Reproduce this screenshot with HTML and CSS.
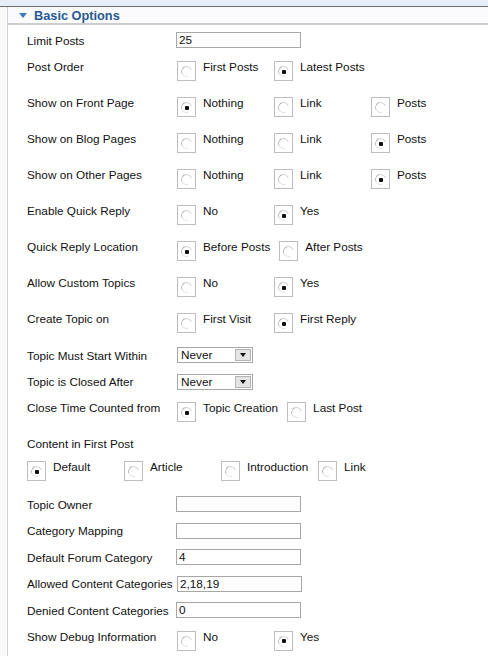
FILE: index.html
```html
<!DOCTYPE html>
<html>
<head>
<meta charset="utf-8">
<link rel="stylesheet" href="styles.css">
</head>
<body>
<div class="topbar"></div>
<div class="page">
  <div class="side"></div>
  <div class="panel">
    <div class="panel-head"><span class="tri"></span><span class="title">Basic Options</span></div>
    <div class="rows">
      <div class="row tr first"><div class="lbl">Limit Posts</div><div class="txt">25</div></div>

      <div class="row rr"><div class="lbl">Post Order</div><div class="opts">
        <div class="opt"><span class="rb"></span><span>First Posts</span></div>
        <div class="opt"><span class="rb on"></span><span>Latest Posts</span></div>
      </div></div>

      <div class="row rr"><div class="lbl">Show on Front Page</div><div class="opts">
        <div class="opt"><span class="rb on"></span><span>Nothing</span></div>
        <div class="opt"><span class="rb"></span><span>Link</span></div>
        <div class="opt"><span class="rb"></span><span>Posts</span></div>
      </div></div>

      <div class="row rr"><div class="lbl">Show on Blog Pages</div><div class="opts">
        <div class="opt"><span class="rb"></span><span>Nothing</span></div>
        <div class="opt"><span class="rb"></span><span>Link</span></div>
        <div class="opt"><span class="rb on"></span><span>Posts</span></div>
      </div></div>

      <div class="row rr"><div class="lbl">Show on Other Pages</div><div class="opts">
        <div class="opt"><span class="rb"></span><span>Nothing</span></div>
        <div class="opt"><span class="rb"></span><span>Link</span></div>
        <div class="opt"><span class="rb on"></span><span>Posts</span></div>
      </div></div>

      <div class="row rr"><div class="lbl">Enable Quick Reply</div><div class="opts">
        <div class="opt"><span class="rb"></span><span>No</span></div>
        <div class="opt"><span class="rb on"></span><span>Yes</span></div>
      </div></div>

      <div class="row rr"><div class="lbl">Quick Reply Location</div><div class="opts">
        <div class="opt"><span class="rb on"></span><span>Before Posts</span></div>
        <div class="opt"><span class="rb"></span><span>After Posts</span></div>
      </div></div>

      <div class="row rr"><div class="lbl">Allow Custom Topics</div><div class="opts">
        <div class="opt"><span class="rb"></span><span>No</span></div>
        <div class="opt"><span class="rb on"></span><span>Yes</span></div>
      </div></div>

      <div class="row rr"><div class="lbl">Create Topic on</div><div class="opts">
        <div class="opt"><span class="rb"></span><span>First Visit</span></div>
        <div class="opt"><span class="rb on"></span><span>First Reply</span></div>
      </div></div>

      <div class="row sr1"><div class="lbl">Topic Must Start Within</div><div class="sel"><span>Never</span><span class="sel-btn"><span class="arrow"></span></span></div></div>
      <div class="row sr2"><div class="lbl">Topic is Closed After</div><div class="sel"><span>Never</span><span class="sel-btn"><span class="arrow"></span></span></div></div>

      <div class="row rr"><div class="lbl">Close Time Counted from</div><div class="opts">
        <div class="opt"><span class="rb on"></span><span>Topic Creation</span></div>
        <div class="opt"><span class="rb"></span><span>Last Post</span></div>
      </div></div>

      <div class="row cl"><div class="lbl wide">Content in First Post</div></div>
      <div class="row rr tall"><div class="opts flush">
        <div class="opt"><span class="rb on"></span><span>Default</span></div>
        <div class="opt"><span class="rb"></span><span>Article</span></div>
        <div class="opt"><span class="rb"></span><span>Introduction</span></div>
        <div class="opt"><span class="rb"></span><span>Link</span></div>
      </div></div>

      <div class="row tr"><div class="lbl">Topic Owner</div><div class="txt"></div></div>
      <div class="row tr"><div class="lbl">Category Mapping</div><div class="txt"></div></div>
      <div class="row tr"><div class="lbl">Default Forum Category</div><div class="txt">4</div></div>
      <div class="row tr"><div class="lbl">Allowed Content Categories</div><div class="txt shift">2,18,19</div></div>
      <div class="row tr"><div class="lbl">Denied Content Categories</div><div class="txt">0</div></div>

      <div class="row rr"><div class="lbl">Show Debug Information</div><div class="opts">
        <div class="opt"><span class="rb"></span><span>No</span></div>
        <div class="opt"><span class="rb on"></span><span>Yes</span></div>
      </div></div>
    </div>
  </div>
</div>
</body>
</html>
```
FILE: styles.css
```css
html, body {
  margin: 0;
  padding: 0;
  background: #ffffff;
}
body {
  font-family: "Liberation Sans", Arial, sans-serif;
  font-size: 11.75px;
  color: #111111;
  width: 488px;
  height: 656px;
  overflow: hidden;
}
.topbar {
  height: 6px;
  background: #e6eef9;
  border-bottom: 1px solid #6e6e6e;
}
.page {
  display: flex;
  height: 649px;
}
.side {
  width: 7px;
  flex: none;
  background: #f8f8f8;
  border-right: 1px solid #d4d4d4;
}
.panel {
  flex: 1;
  min-width: 0;
}
.panel-head {
  height: 16px;
  background: #fbfafd;
  border-bottom: 2px solid #cdcdcd;
  display: flex;
  align-items: center;
  padding-left: 11px;
}
.tri {
  width: 0;
  height: 0;
  border-left: 4px solid transparent;
  border-right: 4px solid transparent;
  border-top: 5px solid #3a7cc0;
  margin-right: 7px;
  margin-top: 1px;
}
.title {
  font-weight: bold;
  font-size: 12.75px;
  color: #285a92;
}
.rows {
  padding-top: 1px;
}
.row {
  display: flex;
  padding-left: 19px;
  box-sizing: border-box;
}
.row.tr {
  height: 26.5px;
  align-items: center;
}
.row.tr.first {
  height: 28px;
}
.row.sr1 {
  height: 26px;
  align-items: center;
}
.row.sr2 {
  height: 27px;
  align-items: center;
}
.row.rr {
  height: 36px;
  align-items: flex-start;
  padding-top: 5px;
  line-height: 15px;
}
.row.rr.tall {
  height: 37px;
}
.row.cl {
  height: 23px;
  align-items: flex-start;
  padding-top: 5px;
  line-height: 15px;
}
.lbl {
  width: 149px;
  flex: none;
  white-space: nowrap;
}
.lbl.wide {
  width: auto;
}
.txt {
  width: 125px;
  height: 16px;
  box-sizing: border-box;
  border: 1px solid #a7a7a7;
  padding-left: 2px;
  line-height: 14px;
  background: #fff;
}
.txt.shift {
  margin-left: 1px;
}
.sel {
  width: 76px;
  height: 16px;
  box-sizing: border-box;
  margin-left: 1px;
  border: 1px solid #a7a7a7;
  display: flex;
  align-items: center;
  justify-content: space-between;
  padding-left: 3px;
  line-height: 14px;
  background: #fff;
}
.sel-btn {
  width: 16px;
  height: 12px;
  box-sizing: border-box;
  margin-right: 1px;
  background: #e4e4e4;
  border: 1px solid #b4b4b4;
  display: flex;
  align-items: center;
  justify-content: center;
}
.arrow {
  width: 0;
  height: 0;
  border-left: 3.5px solid transparent;
  border-right: 3.5px solid transparent;
  border-top: 4px solid #111;
}
.opts {
  display: flex;
  margin-left: 1px;
}
.opts.flush {
  margin-left: 0;
}
.opt {
  display: flex;
  align-items: flex-start;
  min-width: 88px;
  margin-right: 9px;
  white-space: nowrap;
}
.rb {
  position: relative;
  flex: none;
  width: 19px;
  height: 20px;
  box-sizing: border-box;
  border: 1px solid #bdbdbd;
  background: #fff;
  margin-top: 2px;
  margin-right: 7px;
}
.rb::before {
  content: "";
  position: absolute;
  left: 3px;
  top: 4px;
  width: 11px;
  height: 11px;
  box-sizing: border-box;
  border-radius: 50%;
  border: 1.5px solid;
  border-color: #d2d2d2 transparent #e4e4e4 #b6b6b6;
  transform: rotate(25deg);
}
.rb.on::after {
  content: "";
  position: absolute;
  left: 6.5px;
  top: 7.5px;
  width: 4px;
  height: 4px;
  border-radius: 1px;
  background: #111;
}
```
